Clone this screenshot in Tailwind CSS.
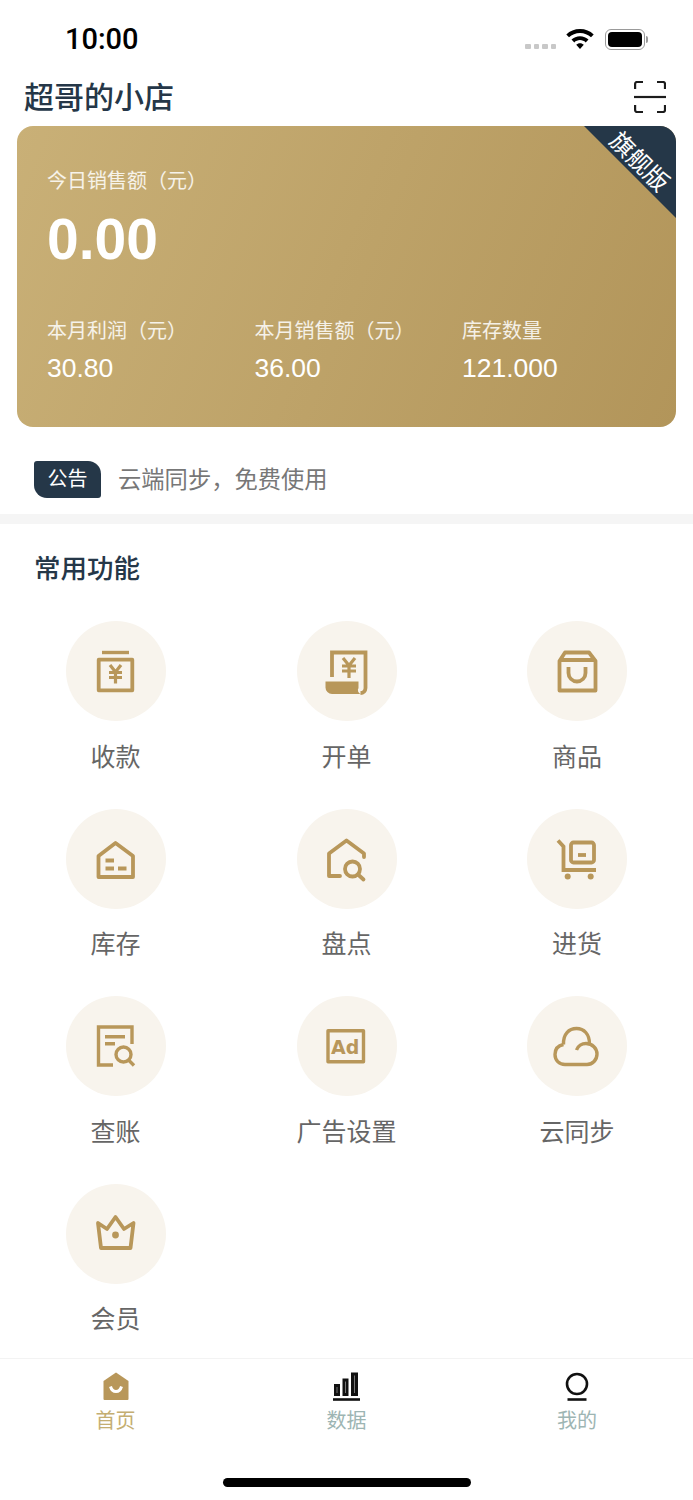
<!DOCTYPE html>
<html lang="zh-CN">
<head>
<meta charset="UTF-8">
<meta name="viewport" content="width=device-width, initial-scale=1.0">
<title>超哥的小店</title>
<script src="https://cdn.jsdelivr.net/npm/@tailwindcss/browser@4"></script>
</head>
<body class="bg-white font-['Liberation_Sans','Noto_Sans_CJK_SC',sans-serif]">
<div class="w-[693px] h-[1500px] flex flex-col overflow-hidden bg-white">

  <!-- status bar -->
  <div class="h-[70px] pt-[8px] pl-[65px] pr-[48px] flex items-center justify-between shrink-0">
    <span class="font-['Roboto'] font-medium text-[29px] leading-none text-black">10:00</span>
    <div class="flex items-center">
      <div class="flex gap-[3px] mt-[14px] mr-[10px]">
        <span class="w-[5.5px] h-[5px] rounded-[1px] bg-[#c8c8c8]"></span>
        <span class="w-[5.5px] h-[5px] rounded-[1px] bg-[#c8c8c8]"></span>
        <span class="w-[5.5px] h-[5px] rounded-[1px] bg-[#c8c8c8]"></span>
        <span class="w-[5.5px] h-[5px] rounded-[1px] bg-[#c8c8c8]"></span>
      </div>
      <svg class="w-[28px] h-[20px] mr-[11px] -mt-[1px]" viewBox="0 0 28 20" fill="black">
        <path d="M14 0C8.600 0 3.900 2 0.300 5.400L3 8.200C5.900 5.500 9.800 3.900 14 3.900s8.100 1.600 11 4.300l2.700-2.800C24.100 2 19.400 0 14 0z"/>
        <path d="M14 7.200c-3.300 0-6.300 1.300-8.500 3.400l2.800 2.800c1.500-1.400 3.500-2.300 5.700-2.300s4.200 0.900 5.700 2.300l2.800-2.800C20.300 8.500 17.300 7.200 14 7.200z"/>
        <path d="M14 14.300c-1.500 0-2.800 0.600-3.800 1.500L14 20l3.800-4.200c-1-0.900-2.300-1.500-3.800-1.500z"/>
      </svg>
      <div class="relative w-[40px] h-[21px] rounded-[6px] border border-[#9a9a9a] p-[2px]">
        <div class="w-full h-full rounded-[4px] bg-black"></div>
        <span class="absolute right-[-4px] top-[6px] w-[2px] h-[7px] rounded-r-[2px] bg-[#9a9a9a]"></span>
      </div>
    </div>
  </div>

  <!-- title -->
  <div class="h-[56px] pl-[24px] pr-[27px] flex items-center justify-between shrink-0">
    <h1 class="text-[30px] leading-none font-medium text-[#253748]">超哥的小店</h1>
    <svg class="w-[32px] h-[32px] -mt-[2px]" viewBox="0 0 32 32" fill="none" stroke="#1c1c1c" stroke-width="2.200">
      <path d="M1.100 8V3a2 2 0 0 1 2-2H9M23 1h6a2 2 0 0 1 2 2v5M1.100 24v5a2 2 0 0 0 2 2H9M23 31h6a2 2 0 0 0 2-2v-5"/>
      <path d="M0 16h32"/>
    </svg>
  </div>

  <!-- sales card -->
  <div class="relative mx-[17px] h-[301px] shrink-0 rounded-[16px] overflow-hidden bg-[linear-gradient(112deg,#c9b077,#b2955a)] text-white">
    <div class="pl-[30px] pt-[41px]">
      <p class="text-[20px] leading-[28px] text-white/85">今日销售额（元）</p>
      <p class="mt-[12px] text-[57px] leading-[64px] font-bold">0.00</p>
      <div class="mt-[46px] grid grid-cols-[207.500px_207.500px_1fr]">
        <div>
          <p class="text-[20px] leading-[28px] text-white/85">本月利润（元）</p>
          <p class="mt-[8px] text-[26.500px] leading-[30px]">30.80</p>
        </div>
        <div>
          <p class="text-[20px] leading-[28px] text-white/85">本月销售额（元）</p>
          <p class="mt-[8px] text-[26.500px] leading-[30px]">36.00</p>
        </div>
        <div>
          <p class="text-[20px] leading-[28px] text-white/85">库存数量</p>
          <p class="mt-[8px] text-[26.500px] leading-[30px]">121.000</p>
        </div>
      </div>
    </div>
    <!-- corner ribbon -->
    <div class="absolute right-0 top-0 w-[92px] h-[92px] bg-[#253748] [clip-path:polygon(0_0,100%_0,100%_100%)]"></div>
    <span class="absolute right-[-3px] top-[22px] w-[80px] text-center text-[24px] leading-[28px] rotate-45">旗舰版</span>
  </div>

  <!-- notice -->
  <div class="h-[87px] pt-[17px] pl-[34px] flex items-center shrink-0">
    <span class="w-[67px] h-[37px] flex items-center justify-center bg-[#253748] text-white text-[20px] rounded-tl-[3px] rounded-tr-[13px] rounded-br-[3px] rounded-bl-[13px]">公告</span>
    <span class="ml-[17px] mt-[3px] text-[23.300px] text-[#777777]">云端同步，免费使用</span>
  </div>
  <div class="h-[10px] bg-[#f5f5f5] shrink-0"></div>

  <!-- common functions -->
  <div class="flex-1 min-h-0 overflow-hidden">
    <h2 class="pl-[34px] pt-[27px] text-[26.500px] leading-[36px] font-medium text-[#253748]">常用功能</h2>
    <div class="mt-[34px] grid grid-cols-[231px_231px_230px] gap-y-[37px] text-[#666666] text-[25px] leading-[30px] text-center">

      <div class="flex flex-col items-center">
        <div class="w-[100px] h-[100px] rounded-full bg-[#f8f4ed]">
          <svg viewBox="0 0 100 100" class="w-full h-full" fill="none" stroke="#b8975a" stroke-width="3.800">
            <path d="M36 31.500h27" stroke-width="3.400"/>
            <path d="M32.700 38.700h33.600v30.600H32.700z" stroke-linejoin="round"/>
            <path d="M44 44l5.500 7 5.500-7M43 51.500h13M43 56.500h13M49.500 51v11.500" stroke-width="3.200"/>
          </svg>
        </div>
        <span class="mt-[20.500px]">收款</span>
      </div>

      <div class="flex flex-col items-center">
        <div class="w-[100px] h-[100px] rounded-full bg-[#f8f4ed]">
          <svg viewBox="0 0 100 100" class="w-full h-full" fill="none" stroke="#b8975a" stroke-width="3.800">
            <path d="M35 56V31.500h33.500V67a5 5 0 0 1-5 5"/>
            <path d="M46 37l6 7.500 6-7.500M45 45h14M45 50h14M52 44.500V57" stroke-width="3.200"/>
            <path d="M28.500 60.500H61.500V67a4 4 0 0 0 2.500 6H35a6.500 6.500 0 0 1-6.500-6.500z" fill="#b8975a" stroke="none"/>
          </svg>
        </div>
        <span class="mt-[20.500px]">开单</span>
      </div>

      <div class="flex flex-col items-center">
        <div class="w-[100px] h-[100px] rounded-full bg-[#f8f4ed]">
          <svg viewBox="0 0 100 100" class="w-full h-full" fill="none" stroke="#b8975a" stroke-width="3.800" stroke-linejoin="round">
            <path d="M38 31.500h24l6.500 8.500v29.500h-36V40z"/>
            <path d="M33 39h35"/>
            <path d="M41.500 46v6a8.500 8.500 0 0 0 17 0v-6"/>
          </svg>
        </div>
        <span class="mt-[20.500px]">商品</span>
      </div>

      <div class="flex flex-col items-center">
        <div class="w-[100px] h-[100px] rounded-full bg-[#f8f4ed]">
          <svg viewBox="0 0 100 100" class="w-full h-full" fill="none" stroke="#b8975a" stroke-width="3.800" stroke-linejoin="round">
            <path d="M49.500 34L32.500 47v21h34.500V47z"/>
            <path d="M39.500 51.500H48M39.500 59.500H48M52 59.500h8.500" stroke-width="4"/>
          </svg>
        </div>
        <span class="mt-[20.500px]">库存</span>
      </div>

      <div class="flex flex-col items-center">
        <div class="w-[100px] h-[100px] rounded-full bg-[#f8f4ed]">
          <svg viewBox="0 0 100 100" class="w-full h-full" fill="none" stroke="#b8975a" stroke-width="3.800" stroke-linecap="round" stroke-linejoin="round">
            <path d="M43 67H32V44.500L49.500 31.500 67 44.500V48"/>
            <circle cx="55.500" cy="60" r="7.500"/>
            <path d="M61 65.500l5.500 5"/>
          </svg>
        </div>
        <span class="mt-[20.500px]">盘点</span>
      </div>

      <div class="flex flex-col items-center">
        <div class="w-[100px] h-[100px] rounded-full bg-[#f8f4ed]">
          <svg viewBox="0 0 100 100" class="w-full h-full" fill="none" stroke="#b8975a" stroke-width="3.800">
            <path d="M31 31.500l5.500 6V61H69"/>
            <rect x="44" y="33.500" width="23" height="20" rx="2.500"/>
            <path d="M51 46h8"/>
            <circle cx="40.700" cy="67.500" r="3" fill="#b8975a" stroke="none"/>
            <circle cx="63.700" cy="67.500" r="3" fill="#b8975a" stroke="none"/>
          </svg>
        </div>
        <span class="mt-[20.500px]">进货</span>
      </div>

      <div class="flex flex-col items-center">
        <div class="w-[100px] h-[100px] rounded-full bg-[#f8f4ed]">
          <svg viewBox="0 0 100 100" class="w-full h-full" fill="none" stroke="#b8975a" stroke-width="3.400">
            <path d="M47 69H32.500V31H66v17"/>
            <path d="M39 40.700h20M39 47.700h10"/>
            <circle cx="57.500" cy="58.500" r="7.500"/>
            <path d="M62.500 64l5.500 5.500"/>
          </svg>
        </div>
        <span class="mt-[20.500px]">查账</span>
      </div>

      <div class="flex flex-col items-center">
        <div class="w-[100px] h-[100px] rounded-full bg-[#f8f4ed]">
          <svg viewBox="0 0 100 100" class="w-full h-full" fill="none" stroke="#b8975a" stroke-width="3.400">
            <rect x="31" y="34.800" width="35.500" height="31" stroke-linejoin="round"/>
            <text x="34" y="58" font-family="DejaVu Sans" font-weight="700" font-size="19" fill="#b8975a" stroke="none">Ad</text>
          </svg>
        </div>
        <span class="mt-[20.500px]">广告设置</span>
      </div>

      <div class="flex flex-col items-center">
        <div class="w-[100px] h-[100px] rounded-full bg-[#f8f4ed]">
          <svg viewBox="0 0 100 100" class="w-full h-full" fill="none" stroke="#b8975a" stroke-width="3.400">
            <path d="M36.500 48.500C36 38 42 32.500 49.500 32.500C57 32.500 62.500 38 62.500 48"/>
            <path d="M49.500 54C51 50 55 47.500 59 47.500C65.500 47.500 70 52.500 70 58C70 64 65.500 68.500 60 68.500H38C32 68.500 28 64 28 58.500C28 53 31.500 49.500 36.500 48.500"/>
          </svg>
        </div>
        <span class="mt-[20.500px]">云同步</span>
      </div>

      <div class="flex flex-col items-center">
        <div class="w-[100px] h-[100px] rounded-full bg-[#f8f4ed]">
          <svg viewBox="0 0 100 100" class="w-full h-full" fill="none" stroke="#b8975a" stroke-width="3.800" stroke-linejoin="round">
            <path d="M32 39l9 6 8.500-12 8.500 12 9.500-6-3 25H35z"/>
            <circle cx="49.500" cy="51" r="3.400" fill="#b8975a" stroke="none"/>
          </svg>
        </div>
        <span class="mt-[20.500px]">会员</span>
      </div>

    </div>
  </div>

  <!-- tab bar -->
  <div class="h-[142px] border-t border-[#f3f3f3] shrink-0 flex flex-col">
    <div class="grid grid-cols-[231px_231px_230px] pt-[13px] text-[20px] leading-[26px] text-center text-[#9db5b3]">
      <div class="flex flex-col items-center">
        <svg class="w-[26px] h-[29px]" viewBox="0 0 26 29">
          <path d="M13 0.500L25.500 9v18a1 1 0 0 1-1 1h-23a1 1 0 0 1-1-1V9z" fill="#b8975a"/>
          <path d="M7.500 14.500c1 3.500 3 5 5.500 5s4.500-1.500 5.500-5" fill="none" stroke="white" stroke-width="3"/>
        </svg>
        <span class="mt-[7px] text-[#c4ae72]">首页</span>
      </div>
      <div class="flex flex-col items-center">
        <svg class="w-[27px] h-[29px]" viewBox="0 0 27 29" fill="#111" stroke="#111">
          <rect x="1.500" y="12.500" width="5" height="11"/>
          <rect x="10" y="7" width="5" height="16.500"/>
          <rect x="18.500" y="1" width="6" height="22.500"/>
          <path d="M4 15v6M12.500 9.500V21M21.500 3.500V21" fill="none" stroke="#777" stroke-width="1"/>
          <path d="M0 27.500h27" fill="none" stroke-width="2.600"/>
        </svg>
        <span class="mt-[7px]">数据</span>
      </div>
      <div class="flex flex-col items-center">
        <svg class="w-[24px] h-[29px]" viewBox="0 0 24 29" fill="none" stroke="#111">
          <circle cx="12" cy="12" r="10" stroke-width="2.600"/>
          <path d="M2.500 27.500h19" stroke-width="2.600"/>
        </svg>
        <span class="mt-[7px]">我的</span>
      </div>
    </div>
    <div class="mt-auto mb-[13px] mx-auto w-[248px] h-[9px] rounded-full bg-black"></div>
  </div>

</div>
</body>
</html>
